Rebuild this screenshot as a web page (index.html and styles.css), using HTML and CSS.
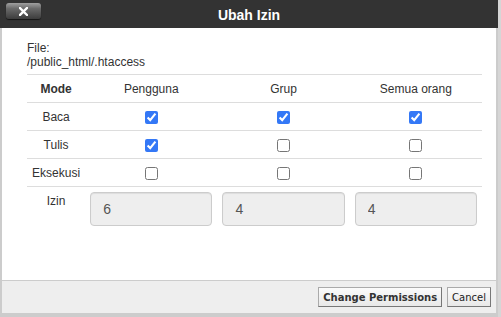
FILE: index.html
```html
<!DOCTYPE html>
<html>
<head>
<meta charset="utf-8">
<link rel="stylesheet" href="styles.css">
</head>
<body>
<div class="dialog">
  <div class="titlebar">
    <button class="close" type="button" aria-label="close">
      <svg width="9" height="9" viewBox="0 0 9 9"><path d="M1 1 L8 8 M8 1 L1 8" stroke="#fff" stroke-width="2.4" stroke-linecap="square"/></svg>
    </button>
    <div class="title">Ubah Izin</div>
  </div>
  <div class="content">
    <div class="file">
      <div>File:</div>
      <div>/public_html/.htaccess</div>
    </div>
    <table class="perms">
      <colgroup>
        <col class="c-mode"><col class="c-col"><col class="c-col"><col class="c-col">
      </colgroup>
      <tr class="head">
        <th>Mode</th><td>Pengguna</td><td>Grup</td><td>Semua orang</td>
      </tr>
      <tr>
        <td>Baca</td>
        <td><input type="checkbox" checked></td>
        <td><input type="checkbox" checked></td>
        <td><input type="checkbox" checked></td>
      </tr>
      <tr>
        <td>Tulis</td>
        <td><input type="checkbox" checked></td>
        <td><input type="checkbox"></td>
        <td><input type="checkbox"></td>
      </tr>
      <tr>
        <td>Eksekusi</td>
        <td><input type="checkbox"></td>
        <td><input type="checkbox"></td>
        <td><input type="checkbox"></td>
      </tr>
      <tr class="izin">
        <td class="label">Izin</td>
        <td><input class="field" type="text" value="6" disabled></td>
        <td><input class="field" type="text" value="4" disabled></td>
        <td><input class="field" type="text" value="4" disabled></td>
      </tr>
    </table>
  </div>
  <div class="footer">
    <button class="btn primary" type="button">Change Permissions</button>
    <button class="btn" type="button">Cancel</button>
  </div>
</div>
</body>
</html>
```
FILE: styles.css
```css
html, body {
  margin: 0;
  padding: 0;
}
body {
  width: 501px;
  height: 317px;
  overflow: hidden;
  background: #d6d6d6;
  font-family: "Liberation Sans", Arial, sans-serif;
  font-size: 12px;
  color: #333;
}
.dialog {
  width: 498px;
  height: 317px;
  display: flex;
  flex-direction: column;
}
.titlebar {
  height: 28px;
  background: #333;
  position: relative;
  display: flex;
  align-items: center;
  justify-content: center;
}
.title {
  color: #fff;
  font-weight: bold;
  font-size: 14px;
  padding-top: 2px;
}
.close {
  position: absolute;
  left: 6px;
  top: 3px;
  width: 35px;
  height: 16px;
  padding: 0;
  border: none;
  border-radius: 3px;
  background: linear-gradient(#a0a0a0 0%, #6a6a6a 35%, #3c3c3c 100%);
  box-shadow: 0 1px 1px rgba(0,0,0,0.6);
  display: flex;
  align-items: center;
  justify-content: center;
}
.close svg { display: block; }
.content {
  height: 252px;
  background: #fff;
  border-left: 2px solid #cccccc;
  border-right: 2px solid #cccccc;
  padding: 0 14px 0 25px;
}
.file {
  padding-top: 13px;
  line-height: 14px;
  padding-bottom: 5px;
}
.perms {
  width: 455px;
  border-collapse: collapse;
  border-top: 1px solid #ddd;
}
.c-mode { width: 58px; }
.c-col { width: 132px; }
.perms th, .perms td {
  padding: 0;
  height: 27px;
  text-align: center;
  vertical-align: middle;
  font-size: 12px;
  color: #333;
}
.perms th { font-weight: bold; }
.perms tr { border-bottom: 1px solid #ddd; }
.perms tr.izin { border-bottom: none; }
.perms tr.izin td {
  padding: 5px 5px 0;
  vertical-align: top;
}
.perms tr.izin td.label {
  padding-top: 7px;
  line-height: 14px;
}
input[type=checkbox] {
  width: 13px;
  height: 13px;
  margin: 0;
  vertical-align: middle;
  accent-color: #3478f6;
}
.field {
  display: block;
  box-sizing: border-box;
  width: 100%;
  height: 34px;
  margin: 0;
  padding: 6px 12px;
  border: 1px solid #ccc;
  border-radius: 4px;
  background: #eee;
  color: #555;
  font-family: "Liberation Sans", Arial, sans-serif;
  font-size: 14px;
  box-shadow: inset 0 1px 1px rgba(0,0,0,0.075);
}
.footer {
  height: 32px;
  background: #eee;
  border-top: 1px solid #ccc;
  border-left: 2px solid #cccccc;
  border-right: 2px solid #cccccc;
  border-bottom: 4px solid #cccccc;
  display: flex;
  align-items: center;
  justify-content: flex-end;
  gap: 5px;
  padding-right: 5px;
}
.btn {
  height: 20px;
  margin: 0;
  padding: 0 4px;
  border: 1px solid #aaa;
  border-right-color: #777;
  border-bottom-color: #777;
  border-radius: 0;
  background: linear-gradient(#fbfbfb, #e8e8e8);
  font-family: "DejaVu Sans", Verdana, sans-serif;
  font-size: 10px;
  color: #222;
}
.btn.primary {
  font-weight: bold;
  color: #333;
}
```
